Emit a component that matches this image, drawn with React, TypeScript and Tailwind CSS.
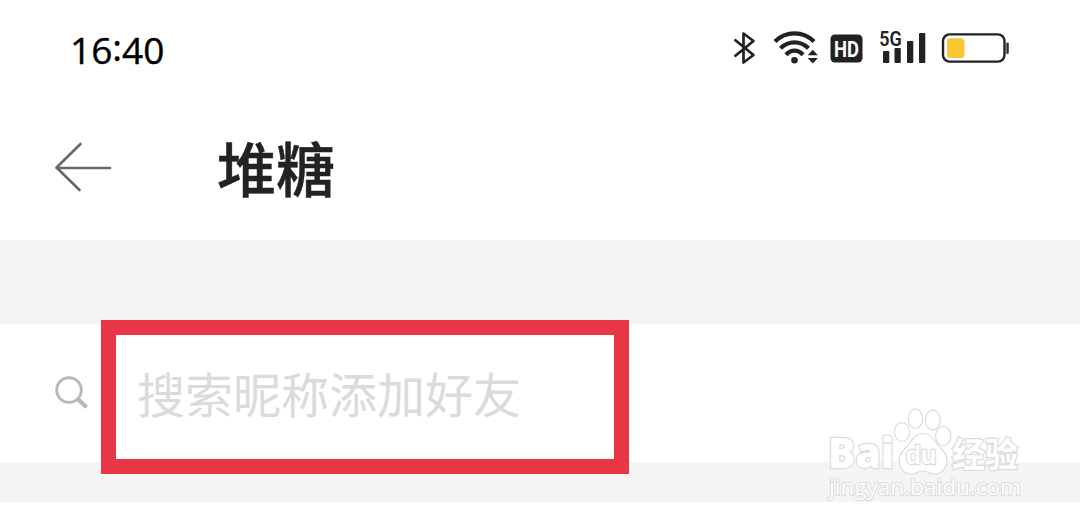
const BluetoothIcon = () => (
  <svg className="h-[34px] w-[24px]" viewBox="0 0 24 34" fill="none" stroke="#222" strokeWidth="2.7" strokeLinejoin="round">
    <path d="M2.5 8.5 L21.5 24 L11.5 31.5 V2.5 L21.5 10 L2.5 25.5" />
  </svg>
);

const WifiIcon = () => (
  <svg className="h-[36px] w-[46px]" viewBox="0 0 46 36" fill="none" stroke="#222" strokeWidth="4.3">
    <path d="M2 11.5 C13 0.7 30 0.7 41 11.5" />
    <path d="M7.5 18.2 C15.5 10.3 27.5 10.3 35.5 18.2" />
    <path d="M13 24.7 C18 19.2 25 19.2 30 24.7" />
    <circle cx="21.5" cy="30.2" r="3.3" fill="#222" stroke="none" />
    <path d="M39.8 19.8 L44.9 25.2 H34.7 Z M39.8 33.5 L44.9 28.1 H34.7 Z" fill="#222" stroke="none" />
  </svg>
);

const HdIcon = () => (
  <svg className="h-[30px] w-[33px]" viewBox="0 0 33 30">
    <rect x="0.5" y="1.5" width="32" height="28" rx="4.5" fill="#222" />
    <text x="4" y="23.5" fontSize="22" fontWeight="700" fill="#fff" textLength="25" lengthAdjust="spacingAndGlyphs" className="font-['Roboto',sans-serif]">HD</text>
  </svg>
);

const SignalIcon = () => (
  <svg className="h-[36px] w-[48px] overflow-visible" viewBox="0 0 48 36" fill="#222">
    <rect x="4" y="21" width="6.3" height="12" rx="1" />
    <rect x="15.5" y="18" width="6.3" height="15" rx="1" />
    <rect x="28" y="11" width="6.3" height="22" rx="1" />
    <rect x="40" y="3" width="6.3" height="30" rx="1" />
    <text x="0.2" y="16.2" fontSize="21" fontWeight="600" textLength="22.5" lengthAdjust="spacingAndGlyphs" className="font-['Roboto',sans-serif]" stroke="#fff" strokeWidth="2" paintOrder="stroke">5G</text>
  </svg>
);

const BatteryIcon = () => (
  <svg className="h-[32px] w-[68px]" viewBox="0 0 68 32">
    <rect x="2" y="2.4" width="61.5" height="27.2" rx="6.5" fill="none" stroke="#222" strokeWidth="2.4" />
    <rect x="6" y="6.2" width="17.5" height="19.8" rx="3.5" fill="#fac532" />
    <rect x="65.3" y="10.5" width="2.5" height="11.5" rx="1.2" fill="#333" />
  </svg>
);

const BackIcon = () => (
  <svg className="relative -top-px h-[52px] w-[60px]" viewBox="0 0 60 52" fill="none" stroke="#686868" strokeWidth="2.6" strokeLinecap="round" strokeLinejoin="round">
    <path d="M26.5 3 L2.5 26.5 L25.5 49 M2.5 27 H56" />
  </svg>
);

const SearchIcon = () => (
  <svg className="h-[36px] w-[36px]" viewBox="0 0 36 36" fill="none" stroke="#b8b8b8">
    <circle cx="15" cy="15" r="12.3" strokeWidth="2.9" />
    <path d="M23.5 23.8 L32.5 32.3" strokeWidth="4.2" />
  </svg>
);

// Translucent logo laid over the bottom right corner
const Watermark = () => (
  <svg className="absolute top-[400px] left-[820px] h-[110px] w-[210px]" viewBox="0 0 210 110" fill="#fff" stroke="#dcdcdc" strokeWidth="1.2">
    <text x="8" y="68" fontSize="43" fontWeight="800" textLength="66" lengthAdjust="spacingAndGlyphs" paintOrder="stroke" strokeWidth="2.6" className="font-['Open_Sans',sans-serif]">Bai</text>
    <ellipse cx="82" cy="32" rx="7.6" ry="9.5" />
    <ellipse cx="95.5" cy="18.7" rx="7.2" ry="9.8" />
    <ellipse cx="112.7" cy="20" rx="7.5" ry="9.8" />
    <ellipse cx="123.3" cy="36" rx="7.8" ry="9.5" />
    <path d="M102.5 33.5 C96 33.5 93 38 90.5 42 C86 49 79 52 79 60 C79 69 85 74 91 74 C97 74 98 71 103 71 C108 71 109 74 115 74 C121 74 127 69 127 60 C127 53 121 49 115.5 42 C112 37 109 33.5 102.5 33.5 Z" />
    <text x="85.5" y="64" fontSize="25" fontWeight="700" textLength="31" lengthAdjust="spacingAndGlyphs" paintOrder="stroke" strokeWidth="2.4" className="font-['Liberation_Sans',sans-serif]">du</text>
    <text x="132" y="67" fontSize="34" fontWeight="700" textLength="66" lengthAdjust="spacingAndGlyphs" paintOrder="stroke" strokeWidth="2.6" className="font-['Noto_Sans_CJK_SC',sans-serif]">经验</text>
    <text x="9" y="95" fontSize="21.5" textLength="192" lengthAdjust="spacingAndGlyphs" paintOrder="stroke" strokeWidth="2" className="font-['Open_Sans',sans-serif]">jingyan.baidu.com</text>
  </svg>
);

const App = () => {
  return (
    <div className="relative h-[524px] w-[1080px] overflow-hidden bg-white font-['Noto_Sans_CJK_SC',sans-serif]">
      <div className="flex h-24 items-center justify-between pr-[71px] pl-[70px]">
        <span className="pt-[2px] font-['Open_Sans',sans-serif] text-[37px] leading-none font-medium text-black [-webkit-text-stroke:0.4px_black]">
          16<span className="relative -top-[3px]">:</span>40
        </span>
        <div className="flex items-center">
          <BluetoothIcon />
          <div className="ml-[17px]"><WifiIcon /></div>
          <div className="ml-[11px]"><HdIcon /></div>
          <div className="ml-[16px]"><SignalIcon /></div>
          <div className="ml-[14px]"><BatteryIcon /></div>
        </div>
      </div>

      <div className="flex h-36 items-center pl-[54px]">
        <BackIcon />
        <h1 className="ml-[103px] pb-[3px] text-[59px] leading-none font-medium text-[#222] [-webkit-text-stroke:0.5px_#222]">堆糖</h1>
      </div>

      <div className="h-[84px] bg-[#f5f5f5]" />

      <div className="flex h-[138px] items-center pl-[54px]">
        <SearchIcon />
        {/* Red frame reaches past the row into both grey bands */}
        <div className="relative top-[4px] ml-[11px] flex h-[154px] w-[528px] shrink-0 items-center border-[15px] border-[#e93646] bg-white pb-[11px] pl-[21px]">
          <span className="text-[48px] leading-none text-[#dcdada]">搜索昵称添加好友</span>
        </div>
      </div>

      <div className="h-[40px] bg-[#f5f5f5]" />

      <Watermark />
    </div>
  );
};

export default App;
